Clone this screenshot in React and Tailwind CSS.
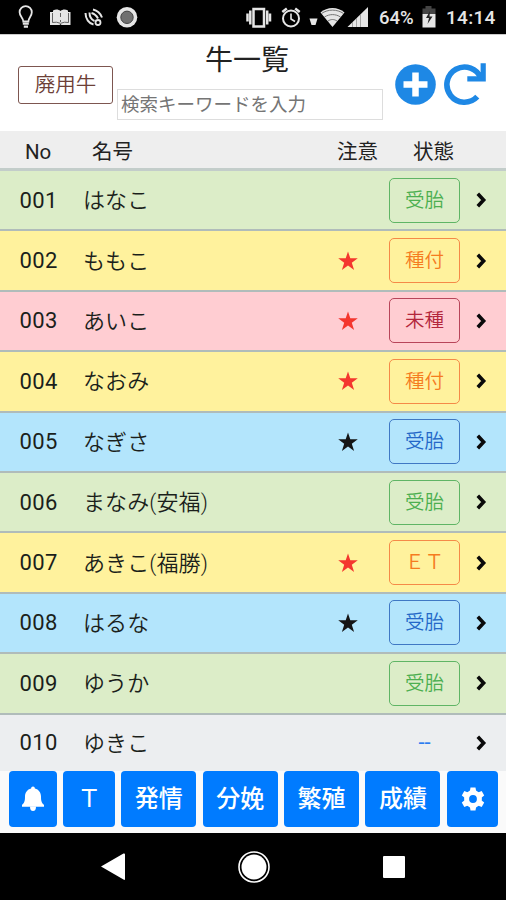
import React from 'react';

const STATUS_STYLES = {
  green: 'border-[#5fb565] text-[#4caf50]',
  orange: 'border-[#f58a48] text-[#f57c1f]',
  red: 'border-[#b8455a] text-[#b3263b]',
  blue: 'border-[#3f78c4] text-[#2468c8]',
};

const ROW_STYLES = {
  green: 'bg-[#dcedc8]',
  yellow: 'bg-[#fff29d]',
  pink: 'bg-[#ffcdd2]',
  blue: 'bg-[#b3e5fc]',
};

const cows = [
  { no: '001', name: 'はなこ', row: 'green', status: '受胎', color: 'green' },
  { no: '002', name: 'ももこ', row: 'yellow', status: '種付', color: 'orange', star: 'text-[#f4372e]' },
  { no: '003', name: 'あいこ', row: 'pink', status: '未種', color: 'red', star: 'text-[#f4372e]' },
  { no: '004', name: 'なおみ', row: 'yellow', status: '種付', color: 'orange', star: 'text-[#f4372e]' },
  { no: '005', name: 'なぎさ', row: 'blue', status: '受胎', color: 'blue', star: 'text-[#151515]' },
  { no: '006', name: 'まなみ(安福)', row: 'green', status: '受胎', color: 'green' },
  { no: '007', name: 'あきこ(福勝)', row: 'yellow', status: 'ＥＴ', color: 'orange', star: 'text-[#f4372e]' },
  { no: '008', name: 'はるな', row: 'blue', status: '受胎', color: 'blue', star: 'text-[#151515]' },
  { no: '009', name: 'ゆうか', row: 'green', status: '受胎', color: 'green' },
];

const Chevron = () => (
  <svg className="w-[11px] h-[16px]" viewBox="0 0 11 16" fill="none" stroke="#0a0a0a" strokeWidth="3.6">
    <path d="M1.8 1.8L7.6 8L1.8 14.2" />
  </svg>
);

const Star = ({ className }) => (
  <svg className={`w-[20px] h-[20px] ${className}`} viewBox="0 0 20 20" fill="currentColor">
    <path d="M10 0.5L12.3 7.3H19.8L13.8 11.7L16.1 19L10 14.6L3.9 19L6.2 11.7L0.2 7.3H7.7Z" />
  </svg>
);

const Bell = () => (
  <svg className="w-[24px] h-[26px]" viewBox="0 0 24 26" fill="#fff">
    <path d="M12 0.5C13.2 0.5 13.8 1.4 13.9 2.5C17.8 3.5 20 6.5 20 10.5C20 15.5 20.8 17 23 18.8V20.7H1V18.8C3.2 17 4 15.5 4 10.5C4 6.5 6.2 3.500 10.1 2.500C10.2 1.4 10.8 0.5 12 0.5Z" />
    <path d="M9 20.5H15C15 23.5 14 25 12 25C10 25 9 23.5 9 20.5Z" />
  </svg>
);

const TEETH = [0, 60, 120, 180, 240, 300];

const Gear = () => (
  <svg className="w-[24px] h-[24px]" viewBox="0 0 24 24" fill="#fff">
    <circle cx="12" cy="12" r="6.400" fill="none" stroke="#fff" strokeWidth="5" />
    {TEETH.map((deg) => (
      <path key={deg} d="M9.500 0.500H14.500L15.300 5H8.700Z" transform={`rotate(${deg} 12 12)`} />
    ))}
  </svg>
);

const StatusBar = () => (
  <div className="h-[34px] bg-black flex items-center text-[#e6e6e6] shrink-0">
    <svg className="w-[160px] h-[34px]" viewBox="0 0 160 34" fill="none" stroke="currentColor">
      <path d="M23.3 21.5C23.3 18 19.6 16.5 19.6 12.3A6 6 0 0 1 31.8 12.3C31.8 16.5 28.4 18 28.4 21.5Z" strokeWidth="1.8" />
      <path d="M22.8 23.6h6M23.8 26.6h4.2" strokeWidth="2.2" />
      <path d="M53 10.5C56 9 58.5 9.5 60.5 11C62.5 9.5 65 9 68 10.5V12H70.5V25H61.5L60.5 24L59.5 25H50V12H53Z" fill="currentColor" stroke="none" />
      <path d="M60.5 13v4M60.5 20v2M52.500 13v9.5q4-1 8 .8q4-1.800 8-.8V13" stroke="#555" strokeWidth="0.9" />
      <path d="M85.5 13c0 6 3.5 10.5 8 11.5M89.5 12.5c0 4 1.5 7 5 8.5M93 9.5c4.5 1 7.5 4 9 8M91.5 13c3 .8 5 2.5 6.5 5.5" strokeWidth="2" />
      <circle cx="98" cy="22.5" r="2.5" strokeWidth="1.8" />
      <circle cx="127" cy="17.3" r="10.3" fill="currentColor" stroke="none" />
      <circle cx="127" cy="17.3" r="6.2" fill="#707070" stroke="#444" strokeWidth="1" />
    </svg>
    <svg className="w-[130px] h-[34px] ml-[82px]" viewBox="242 0 130 34" fill="none" stroke="currentColor">
      <rect x="253.5" y="9" width="10.5" height="17.5" strokeWidth="2.5" />
      <path d="M250.3 10.5v14M267.2 10.5v14M247.5 13.5v8M270 13.5v8" strokeWidth="2.5" />
      <circle cx="291" cy="18.5" r="8" strokeWidth="2" />
      <path d="M291 13.5v5.5l4 2.5" strokeWidth="1.6" />
      <path d="M282.3 12l4.5-3.5M299.7 12l-4.5-3.5" strokeWidth="2.5" />
      <path d="M309.5 18.5h8l-2 6.5h-4z" fill="currentColor" stroke="none" />
      <path d="M320.5 12.5C327 6.5 338 6.5 344.5 12.5L332.5 27z" fill="currentColor" stroke="none" />
      <path d="M321.5 13.5C328 9 337 9 343.5 13.5M324.5 17c5-3.2 11-3.2 16 0M328 21c3-2 6-2 9 0" stroke="#666" strokeWidth="0.9" />
      <path d="M347.5 27L368 7v20z" fill="currentColor" stroke="none" />
      <path d="M352.5 22v5M356.5 18v9M360.5 14v13" stroke="#888" strokeWidth="0.7" />
    </svg>
    <span className="ml-[7px] w-[42px] text-[18.5px] font-medium pt-[3px]">64%</span>
    <svg className="w-[16px] h-[22px]" viewBox="0 0 16 22">
      <path d="M4.5 0h6v2.5h4V8h-13V2.5h3z" fill="#444" />
      <path d="M1.5 8h13v13.5h-13z" fill="#e6e6e6" />
      <path d="M9 5l-4 7h3l-1.5 6 5-7.5h-3z" fill="#222" />
    </svg>
    <span className="ml-[9px] text-[19px] font-medium tracking-[0.3px] pt-[3px]">14:14</span>
  </div>
);

const Header = () => (
  <header className="h-[97px] bg-white flex shrink-0 border-t border-[#ccc]">
    <button className="ml-[18px] mt-[31px] w-[95px] h-[38px] border border-[#7d5650] rounded-[3px] text-[20.5px] leading-none text-[#6d4037] font-[350]">
      廃用牛
    </button>
    <div className="ml-[4px] w-[266px] flex flex-col">
      <h1 className="text-[28px] leading-[40px] h-[54px] pt-[6px] pl-[88px] text-[#222]">牛一覧</h1>
      <input
        className="w-[266px] h-[31px] border border-[#ddd] px-[3px] text-[18.5px] placeholder:text-[#757575] outline-none"
        placeholder="検索キーワードを入力"
      />
    </div>
    <svg className="ml-[12px] mt-[29px] w-[41px] h-[41px]" viewBox="0 0 41 41">
      <circle cx="20.5" cy="20.5" r="20.3" fill="#1e88e5" />
      <path d="M20.5 8.5v24M8.5 20.5h24" stroke="#fff" strokeWidth="6.5" />
    </svg>
    <svg className="ml-[8px] mt-[28px] w-[42px] h-[43px]" viewBox="0 0 42 43" fill="none" stroke="#1e88e5">
      <path d="M37 15.5A17.6 17.6 0 1 0 33.3 33.7" strokeWidth="5.6" />
      <path d="M39.2 0.3V15.8H23.3" strokeWidth="5.2" />
      <path d="M31.500 7L38 10V16H34Z" fill="#1e88e5" stroke="none" />
    </svg>
  </header>
);

const CowRow = ({ cow }) => (
  <li className={`h-[60.4px] flex items-center border-b-2 border-[#b0bcba] text-[22px] text-[#1b1f1b] ${ROW_STYLES[cow.row]}`}>
    <span className="w-[83px] pl-[19.5px] tracking-[0.4px]">{cow.no}</span>
    <span className="w-[255px] pt-px font-[350] tracking-[0.1px]">{cow.name}</span>
    <span className="w-[51px]">{cow.star && <Star className={cow.star} />}</span>
    <span className={`w-[71px] h-[45px] border-[1.5px] rounded-[5px] flex items-center justify-center text-[19.5px] font-[350] ${STATUS_STYLES[cow.color]}`}>
      {cow.status}
    </span>
    <span className="ml-[16px]"><Chevron /></span>
  </li>
);

const NavButton = ({ width, children }) => (
  <button className={`h-[56px] bg-[#007bff] rounded-[4px] text-white text-[24px] font-medium leading-none flex items-center justify-center shrink-0 ${width}`}>
    {children}
  </button>
);

export default function App() {
  return (
    <div className="w-[506px] h-[900px] overflow-hidden flex flex-col bg-white font-[Roboto,'Noto_Sans_CJK_JP',sans-serif]">
      <StatusBar />
      <Header />

      <div className="h-[40px] shrink-0 bg-[#eee] border-b-[3px] border-[#c3cdca] flex items-center text-[20.5px] text-[#222] pt-[6px]">
        <span className="w-[92px] pl-[25px]">No</span>
        <span className="w-[245px]">名号</span>
        <span className="w-[76px]">注意</span>
        <span>状態</span>
      </div>

      <ul className="h-[600px] shrink-0">
        {cows.map((cow) => (
          <CowRow key={cow.no} cow={cow} />
        ))}
        <li className="h-[56.4px] flex items-center bg-[#eceef0] text-[22px] text-[#1b1f1b]">
          <span className="w-[83px] pl-[19.5px] tracking-[0.4px]">010</span>
          <span className="w-[306px] pt-px font-[350] tracking-[0.1px]">ゆきこ</span>
          <span className="w-[71px] text-center text-[#2c7df0]">--</span>
          <span className="ml-[16px]"><Chevron /></span>
        </li>
      </ul>

      <nav className="h-[62px] shrink-0 bg-[#fafafa] flex pl-[9px] gap-[6.4px]">
        <NavButton width="w-[48px]"><Bell /></NavButton>
        <NavButton width="w-[51.5px]"><span className="font-normal">Ｔ</span></NavButton>
        <NavButton width="w-[75px]">発情</NavButton>
        <NavButton width="w-[75px]">分娩</NavButton>
        <NavButton width="w-[75px]">繁殖</NavButton>
        <NavButton width="w-[75px]">成績</NavButton>
        <NavButton width="w-[51.5px]"><Gear /></NavButton>
      </nav>

      <div className="h-[67px] shrink-0 bg-black flex items-center">
        <svg className="ml-[101px] w-[25px] h-[28px]" viewBox="0 0 25 28" fill="#fff">
          <path d="M0 13.5L22.5 0.5Q24 0 24 1.5V26Q24 27.5 22.5 26.5Z" />
        </svg>
        <svg className="ml-[111px] w-[34px] h-[34px]" viewBox="0 0 34 34" fill="none" stroke="#fff">
          <circle cx="17" cy="17" r="15" strokeWidth="1.6" />
          <circle cx="17" cy="17" r="12.5" fill="#fff" stroke="none" />
        </svg>
        <span className="ml-[112px] w-[22px] h-[22px] bg-white rounded-[1px]" />
      </div>
    </div>
  );
}
